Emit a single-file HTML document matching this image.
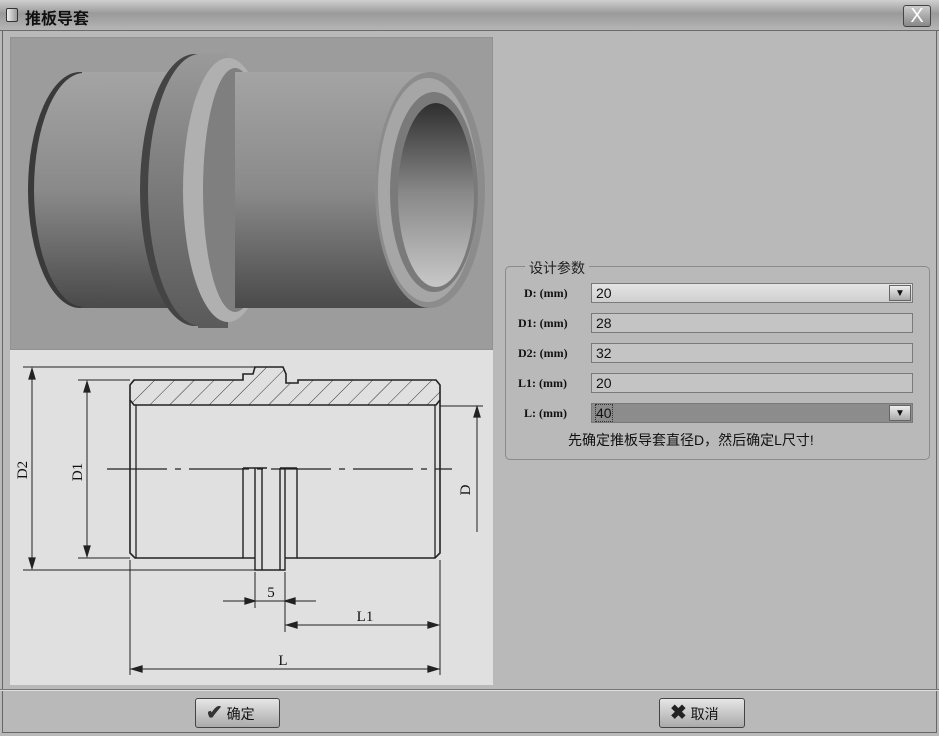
<!DOCTYPE html>
<html><head><meta charset="utf-8"><style>
*{margin:0;padding:0;box-sizing:border-box}
body{width:939px;height:736px;overflow:hidden;background:#b9b9b9;font-family:"Liberation Sans","Noto Sans CJK SC",sans-serif;position:relative}
.title{position:absolute;left:0;top:0;width:939px;height:31px;background:linear-gradient(#d0d0d0,#9a9a9a 45%,#b5b5b5);border-bottom:1px solid #6a6a6a}
.title .t{position:absolute;left:25px;top:5px;font-size:16px;font-weight:bold;color:#111}
.ico{position:absolute;left:6px;top:8px;width:12px;height:14px;border:1px solid #333;background:linear-gradient(90deg,#eee,#999);border-radius:2px}
.close{position:absolute;left:903px;top:5px;width:28px;height:22px;border:1px solid #444;border-radius:3px;background:linear-gradient(#ccc,#888);font-size:20px;text-align:center;line-height:20px;color:#fff}
.frame{position:absolute;left:2px;top:31px;width:935px;height:702px;border:1px solid #666;border-top:none}
.lbl{position:absolute;font-family:"Liberation Serif","Noto Serif CJK SC",serif;font-size:12px;color:#111;font-weight:bold}
.inp{position:absolute;left:591px;width:322px;height:20px;border:1px solid #7a7a7a;background:#c4c4c4;font-size:14px;padding-left:4px;line-height:18px;color:#111}
.dd{position:absolute;right:1px;top:1px;width:22px;height:16px;border:1px solid #666;background:linear-gradient(#eee,#aaa);font-size:10px;text-align:center;line-height:15px}
.btn{position:absolute;top:698px;height:30px;border:1px solid #444;border-radius:3px;background:linear-gradient(#e6e6e6,#aaa);font-size:14px;color:#111;line-height:28px;padding-left:10px}
</style></head><body>
<div class="title"><div class="ico"></div><div class="t">推板导套</div><div class="close">X</div></div>
<div class="frame"></div>
<div style="position:absolute;left:0;top:689px;width:939px;height:1px;background:#777"></div>
<div style="position:absolute;left:0;top:690px;width:939px;height:1px;background:#ddd"></div>

<svg style="position:absolute;left:10px;top:37px" width="483" height="313" viewBox="10 37 483 313">
<defs>
<linearGradient id="cy" x1="0" y1="0" x2="0" y2="1"><stop offset="0" stop-color="#a4a4a4"/><stop offset=".5" stop-color="#8a8a8a"/><stop offset="1" stop-color="#4a4a4a"/></linearGradient>
<linearGradient id="fl" x1="0" y1="0" x2="0" y2="1"><stop offset="0" stop-color="#9a9a9a"/><stop offset="1" stop-color="#5a5a5a"/></linearGradient>
<linearGradient id="hole" x1="0" y1="0" x2="0" y2="1"><stop offset="0" stop-color="#2e2e2e"/><stop offset=".5" stop-color="#8a8a8a"/><stop offset="1" stop-color="#c8c8c8"/></linearGradient>
</defs>
<rect x="10" y="37" width="483" height="313" fill="#9c9c9c"/>
<rect x="10" y="37" width="483" height="313" fill="none" stroke="#888"/>
<ellipse cx="80" cy="190" rx="52" ry="118" fill="#3a3a3a"/>
<rect x="82" y="72" width="95" height="236" fill="url(#cy)"/>
<ellipse cx="84" cy="190" rx="50" ry="117" fill="url(#cy)"/>
<ellipse cx="195" cy="190" rx="55" ry="136" fill="#444"/>
<rect x="198" y="53" width="30" height="275" fill="url(#fl)"/>
<ellipse cx="200" cy="190" rx="52" ry="136" fill="url(#fl)"/>
<ellipse cx="228" cy="190" rx="45" ry="132" fill="#b0b0b0"/>
<ellipse cx="235" cy="190" rx="32" ry="122" fill="#7f7f7f"/>
<rect x="235" y="72" width="195" height="236" fill="url(#cy)"/>
<ellipse cx="430" cy="190" rx="55" ry="118" fill="#8c8c8c"/>
<ellipse cx="428" cy="190" rx="50" ry="112" fill="#a6a6a6"/>
<ellipse cx="434" cy="192" rx="44" ry="100" fill="#7a7a7a"/>
<ellipse cx="436" cy="195" rx="38" ry="92" fill="url(#hole)"/>
</svg>

<svg style="position:absolute;left:10px;top:350px" width="483" height="335" viewBox="10 350 483 335" font-family="Liberation Serif,serif" font-size="15" fill="none" stroke="#222" stroke-width="1.3">
<defs><pattern id="h" width="14" height="14" patternUnits="userSpaceOnUse" patternTransform="rotate(45)"><line x1="0" y1="0" x2="0" y2="14" stroke="#333" stroke-width="1"/></pattern></defs>
<rect x="10" y="350" width="483" height="335" fill="#e0e0e0" stroke="none"/>
<path d="M134 380 L243 380 L243 374 L253 374 L255 367 L283 367 L286 374 L286 383 L298 383 L298 380 L436 380 L440 385 L440 400 L436 405 L134 405 L130 400 L130 385 Z" fill="url(#h)" stroke-width="1.6"/>
<path d="M130 400 L130 553 L135 558 L243 558 M297 558 L435 558 L440 553 L440 400" stroke-width="1.6"/>
<path d="M136 405 L136 558 M435 405 L435 558"/>
<path d="M243 468 L243 558 L255 558 M255 468 L255 570 L285 570 L285 468 M262 468 L262 570 M280 468 L280 570 M297 468 L297 558 L285 558 M243 468 L267 468 M280 468 L297 468" stroke-width="1.4"/>
<line x1="107" y1="469" x2="452" y2="469" stroke-dasharray="60,8,6,8"/>
<path d="M23 367 L255 367 M23 570 L255 570 M32 369 L32 568 M78 380 L130 380 M78 558 L130 558 M87 382 L87 556" stroke-width="1"/>
<path d="M32 369 l-3 10 h6 z M32 568 l-3 -10 h6 z M87 382 l-3 10 h6z M87 556 l-3 -10 h6z" fill="#222"/>
<path d="M440 406 L483 406 M477 408 L477 532" stroke-width="1"/>
<path d="M477 407 l-3 10 h6z" fill="#222"/>
<path d="M223 601 L316 601 M255 572 L255 608 M285 572 L285 632 M285 625 L438 625 M130 560 L130 675 M440 560 L440 675 M130 669 L440 669" stroke-width="1"/>
<path d="M255 601 l-10 -3 v6z M285 601 l10 -3 v6z M287 625 l10 -3 v6z M438 625 l-10 -3 v6z M132 669 l10 -3 v6z M438 669 l-10 -3 v6z" fill="#222"/>
<g fill="#111" stroke="none">
<text x="27" y="470" transform="rotate(-90 27 470)" text-anchor="middle">D2</text>
<text x="82" y="472" transform="rotate(-90 82 472)" text-anchor="middle">D1</text>
<text x="470" y="490" transform="rotate(-90 470 490)" text-anchor="middle">D</text>
<text x="271" y="597" text-anchor="middle">5</text>
<text x="365" y="621" text-anchor="middle">L1</text>
<text x="283" y="665" text-anchor="middle">L</text>
</g>
</svg>

<div style="position:absolute;left:505px;top:266px;width:425px;height:194px;border:1px solid #8a8a8a;border-radius:5px"></div>
<div style="position:absolute;left:525px;top:258px;padding:0 4px;background:#b9b9b9;font-size:14px;color:#222">设计参数</div>
<div class="lbl" style="left:524px;top:286px">D: (mm)</div>
<div class="lbl" style="left:518px;top:316px">D1: (mm)</div>
<div class="lbl" style="left:518px;top:346px">D2: (mm)</div>
<div class="lbl" style="left:518px;top:376px">L1: (mm)</div>
<div class="lbl" style="left:524px;top:406px">L: (mm)</div>
<div class="inp" style="top:283px;background:linear-gradient(#e4e4e4,#cfcfcf)">20<div class="dd">▼</div></div>
<div class="inp" style="top:313px">28</div>
<div class="inp" style="top:343px">32</div>
<div class="inp" style="top:373px">20</div>
<div class="inp" style="top:403px;background:#8c8c8c"><span style="outline:1px dotted #333">40</span><div class="dd">▼</div></div>
<div style="position:absolute;left:568px;top:430px;font-size:14px;color:#111">先确定推板导套直径D，然后确定L尺寸!</div>

<div class="btn" style="left:195px;width:85px"><span style="font-size:20px;font-weight:bold;color:#333">✔</span> 确定</div>
<div class="btn" style="left:659px;width:86px"><span style="font-size:20px;font-weight:bold;color:#222">✖</span> 取消</div>
</body></html>
